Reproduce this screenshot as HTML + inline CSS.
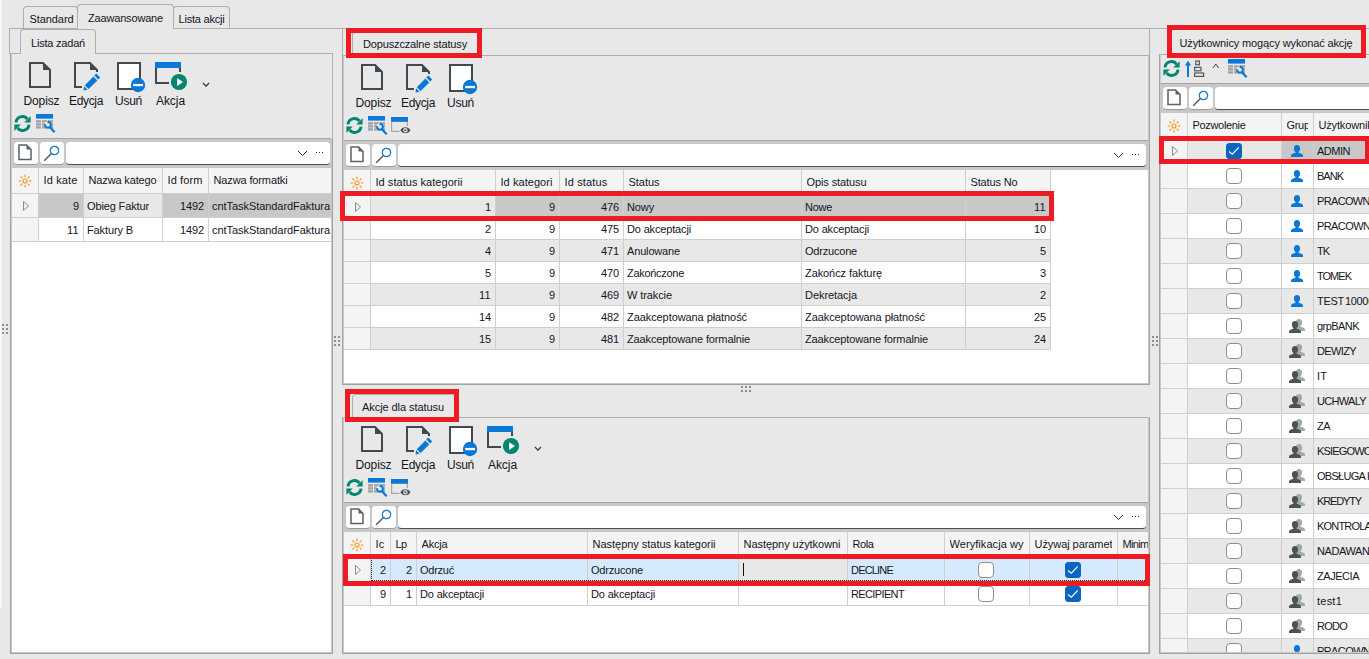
<!DOCTYPE html><html><head><meta charset="utf-8"><title>UI</title><style>
html,body{margin:0;padding:0;width:1369px;height:659px;overflow:hidden}
#root{left:0;top:0;width:1369px;height:659px;overflow:hidden;background:#e8e8e8}
body{width:1369px;height:659px;overflow:hidden;background:#e8e8e8;position:relative;font-family:"Liberation Sans",sans-serif;font-size:11px;color:#15151c}
div,svg{position:absolute;box-sizing:content-box}
.t{white-space:nowrap}
.tab{border:1px solid #aeaeae;border-bottom:none;border-radius:4px 4px 0 0;background:#e8e8e8;box-sizing:border-box}
</style></head><body><div id="root">
<div style="left:0px;top:0px;width:2px;height:608px;background:#f6f6f6;"></div>
<div class="tab" style="left:23px;top:6px;width:55px;height:23px"></div>
<div class="tab" style="left:173px;top:6px;width:57px;height:23px"></div>
<div style="left:9px;top:28px;width:1360px;height:1px;background:#aeaeae;"></div>
<div style="left:9px;top:28px;width:1px;height:26px;background:#aeaeae;"></div>
<div class="tab" style="left:77px;top:4px;width:97px;height:25px"></div>
<div class="t" style="left:24px;top:12px;width:55px;height:14px;line-height:14px;text-align:center;letter-spacing:-0.081px;">Standard</div>
<div class="t" style="left:77px;top:11px;width:97px;height:14px;line-height:14px;text-align:center;letter-spacing:-0.171px;">Zaawansowane</div>
<div class="t" style="left:173px;top:12px;width:57px;height:14px;line-height:14px;text-align:center;letter-spacing:-0.209px;">Lista akcji</div>
<div style="left:10px;top:53px;width:323px;height:1px;background:#aeaeae;"></div>
<div class="tab" style="left:20px;top:29px;width:76px;height:25px"></div>
<div class="t" style="left:20px;top:36px;width:76px;height:14px;line-height:14px;text-align:center;letter-spacing:-0.206px;">Lista zadań</div>
<svg style="left:29px;top:62px" width="24" height="28" viewBox="0 0 24 28"><path d="M1 1H14L21 8V25H1Z" fill="none" stroke="#414a50" stroke-width="2"/><path d="M14 0.5V8H21.5Z" fill="#414a50"/></svg>
<svg style="left:74px;top:62px" width="28" height="30" viewBox="0 0 28 30"><path d="M8 25H1V1H16L23 8V10" fill="none" stroke="#414a50" stroke-width="2"/><path d="M16 0.5V8H23.5Z" fill="#414a50"/><g fill="#0b78d5"><path d="M22.3 11.6L26.2 15.4L24.2 17.4L20.3 13.6Z"/><path d="M19.4 14.5L23.3 18.4L14.6 27L10.8 23.2Z"/><path d="M10.1 24.2L13.6 27.7L9.6 28.4Z"/></g></svg>
<svg style="left:117px;top:62px" width="30" height="32" viewBox="0 0 30 32"><rect x="1" y="1" width="22" height="26" fill="#fff" stroke="#414a50" stroke-width="2"/><circle cx="21" cy="23" r="7.2" fill="#0b78d5"/><rect x="16.2" y="21.9" width="9.8" height="2.3" fill="#fff"/></svg>
<div class="t" style="left:18.5px;top:93.5px;width:46px;height:14px;line-height:14px;text-align:center;letter-spacing:-0.113px;font-size:12px;">Dopisz</div>
<div class="t" style="left:63px;top:93.5px;width:46px;height:14px;line-height:14px;text-align:center;letter-spacing:-0.336px;font-size:12px;">Edycja</div>
<div class="t" style="left:105.5px;top:93.5px;width:46px;height:14px;line-height:14px;text-align:center;letter-spacing:-0.303px;font-size:12px;">Usuń</div>
<svg style="left:155px;top:62px" width="34" height="30" viewBox="0 0 34 30"><path d="M1 6V21H14M25 6V10" fill="none" stroke="#414a50" stroke-width="2"/><rect x="0" y="0" width="26" height="6" fill="#0b78d5"/><circle cx="24" cy="20" r="8.1" fill="#03866f"/><path d="M22.1 16.2V23.9L28 20Z" fill="#fff"/></svg>
<div class="t" style="left:147.5px;top:93.5px;width:46px;height:14px;line-height:14px;text-align:center;letter-spacing:-0.069px;font-size:12px;">Akcja</div>
<svg style="left:202px;top:82px" width="8" height="5.2" viewBox="0 0 8 5.2"><path d="M1 1L4 4.2L7 1" fill="none" stroke="#333" stroke-width="1.2"/></svg>
<svg style="left:14px;top:115px" width="17" height="17" viewBox="0 0 17 17"><g fill="none" stroke="#03866f" stroke-width="3"><path d="M2 7.4A6.4 6.4 0 0 1 13.4 4"/><path d="M15 9.6A6.4 6.4 0 0 1 3.6 13"/></g><path d="M16.6 1.2V7.6H10.2Z" fill="#03866f"/><path d="M0.4 15.8V9.4H6.8Z" fill="#03866f"/></svg>
<svg style="left:36px;top:114px" width="20" height="20" viewBox="0 0 20 20"><rect x="0" y="0" width="17" height="4.6" fill="#0b78d5"/><rect x="0" y="6.2" width="5" height="2.4" fill="#a2a2a2"/><rect x="6" y="6.2" width="5" height="2.4" fill="#a2a2a2"/><rect x="12" y="6.2" width="5" height="2.4" fill="#a2a2a2"/><rect x="0" y="9.2" width="5" height="2.4" fill="#a2a2a2"/><rect x="6" y="9.2" width="5" height="2.4" fill="#a2a2a2"/><rect x="12" y="9.2" width="5" height="2.4" fill="#a2a2a2"/><rect x="0" y="12.2" width="5" height="2.4" fill="#a2a2a2"/><rect x="6" y="12.2" width="5" height="2.4" fill="#a2a2a2"/><rect x="12" y="12.2" width="5" height="2.4" fill="#a2a2a2"/><circle cx="12" cy="10.8" r="3.6" fill="#e8e8e8"/><path d="M11.5 7.94A2.9 2.9 0 1 1 9.14 10.3" fill="none" stroke="#0b78d5" stroke-width="2.1"/><path d="M13.8 13L18.6 18.2" stroke="#0b78d5" stroke-width="2.2"/></svg>
<div style="left:12px;top:138px;width:319px;height:1px;background:#a4a4a4;"></div>
<div style="left:12px;top:139px;width:319px;height:29px;background:#c8c8c8;"></div>
<div style="left:14px;top:142px;width:24px;height:22.5px;background:#fff;border-radius:3.5px;border-bottom:1px solid #9a9a9a;box-sizing:border-box;"></div>
<div style="left:40px;top:142px;width:24px;height:22.5px;background:#fff;border-radius:3.5px;border-bottom:1px solid #9a9a9a;box-sizing:border-box;"></div>
<div style="left:66px;top:142px;width:264px;height:23px;background:#fff;border-radius:3.5px;border-bottom:1px solid #4e4e4e;box-sizing:border-box;"></div>
<svg style="left:18px;top:144px" width="15" height="18" viewBox="0 0 15 18"><path d="M1 1H8.5L13 5.5V15.5H1Z" fill="none" stroke="#5a6268" stroke-width="1.5"/><path d="M8.5 0.6V5.5H13.4Z" fill="#5a6268"/></svg>
<svg style="left:42.5px;top:144.5px" width="18" height="18" viewBox="0 0 18 18"><circle cx="11.5" cy="5.5" r="4.2" fill="none" stroke="#0b78d5" stroke-width="1.2"/><path d="M8.4 8.6L1.2 15.8" stroke="#555" stroke-width="1.4"/></svg>
<svg style="left:297px;top:149.5px" width="11" height="6.5" viewBox="0 0 11 6.5"><path d="M1 1L5.5 5.5L10 1" fill="none" stroke="#333" stroke-width="1"/></svg>
<div style="left:316px;top:152px;width:1px;height:1px;background:#333;"></div>
<div style="left:319px;top:152px;width:1px;height:1px;background:#333;"></div>
<div style="left:322px;top:152px;width:1px;height:1px;background:#333;"></div>
<div style="left:12px;top:168px;width:319px;height:484px;background:#fff;"></div>
<div style="left:12px;top:168px;width:319px;height:26px;background:#f4f4f4;"></div>
<div style="left:12px;top:194px;width:319px;height:24px;background:#c8c8c8;"></div>
<div style="left:12px;top:194px;width:27px;height:24px;background:#f4f4f4;"></div>
<div class="t" style="left:39px;top:195px;width:40px;height:23px;line-height:23px;text-align:right;overflow:hidden;letter-spacing:-0.118px;">9</div>
<div style="left:84px;top:194px;width:79px;height:24px;background:#e8e8e8;"></div>
<div class="t" style="left:87px;top:195px;width:76px;height:23px;line-height:23px;text-align:left;overflow:hidden;white-space:nowrap;letter-spacing:-0.132px;">Obieg Faktur</div>
<div class="t" style="left:163px;top:195px;width:41px;height:23px;line-height:23px;text-align:right;overflow:hidden;letter-spacing:-0.118px;">1492</div>
<div class="t" style="left:212px;top:195px;width:119px;height:23px;line-height:23px;text-align:left;overflow:hidden;white-space:nowrap;letter-spacing:-0.056px;">cntTaskStandardFaktura</div>
<div style="left:12px;top:217px;width:319px;height:1px;background:#cfcfcf;"></div>
<div style="left:12px;top:218px;width:319px;height:24px;background:#fff;"></div>
<div style="left:12px;top:218px;width:27px;height:24px;background:#f4f4f4;"></div>
<div class="t" style="left:39px;top:219px;width:40px;height:23px;line-height:23px;text-align:right;overflow:hidden;letter-spacing:0.291px;">11</div>
<div class="t" style="left:87px;top:219px;width:76px;height:23px;line-height:23px;text-align:left;overflow:hidden;white-space:nowrap;letter-spacing:-0.119px;">Faktury B</div>
<div class="t" style="left:163px;top:219px;width:41px;height:23px;line-height:23px;text-align:right;overflow:hidden;letter-spacing:-0.118px;">1492</div>
<div class="t" style="left:212px;top:219px;width:119px;height:23px;line-height:23px;text-align:left;overflow:hidden;white-space:nowrap;letter-spacing:-0.056px;">cntTaskStandardFaktura</div>
<div style="left:12px;top:241px;width:319px;height:1px;background:#cfcfcf;"></div>
<div style="left:38px;top:168px;width:1px;height:74px;background:#cfcfcf;"></div>
<div class="t" style="left:43.5px;top:168px;width:34.5px;height:25px;line-height:25px;text-align:left;overflow:hidden;white-space:nowrap;letter-spacing:0.14px;">Id kate</div>
<div style="left:83px;top:168px;width:1px;height:74px;background:#cfcfcf;"></div>
<div class="t" style="left:88.5px;top:168px;width:68.5px;height:25px;line-height:25px;text-align:left;overflow:hidden;white-space:nowrap;letter-spacing:-0.142px;">Nazwa katego</div>
<div style="left:162px;top:168px;width:1px;height:74px;background:#cfcfcf;"></div>
<div class="t" style="left:167.5px;top:168px;width:35.5px;height:25px;line-height:25px;text-align:left;overflow:hidden;white-space:nowrap;letter-spacing:0.11px;">Id form</div>
<div style="left:208px;top:168px;width:1px;height:74px;background:#cfcfcf;"></div>
<div class="t" style="left:213.5px;top:168px;width:117px;height:25px;line-height:25px;text-align:left;overflow:hidden;white-space:nowrap;letter-spacing:-0.128px;">Nazwa formatki</div>
<div style="left:12px;top:193px;width:319px;height:1px;background:#cfcfcf;"></div>
<svg style="left:18px;top:173.5px" width="14" height="14" viewBox="0 0 14 14"><circle cx="7" cy="7" r="2" fill="none" stroke="#f7941d" stroke-width="1.1"/><path d="M10.80 7.00L13.40 7.00" stroke="#f7941d" stroke-width="1.1"/><path d="M9.69 9.69L11.53 11.53" stroke="#f7941d" stroke-width="1.1"/><path d="M7.00 10.80L7.00 13.40" stroke="#f7941d" stroke-width="1.1"/><path d="M4.31 9.69L2.47 11.53" stroke="#f7941d" stroke-width="1.1"/><path d="M3.20 7.00L0.60 7.00" stroke="#f7941d" stroke-width="1.1"/><path d="M4.31 4.31L2.47 2.47" stroke="#f7941d" stroke-width="1.1"/><path d="M7.00 3.20L7.00 0.60" stroke="#f7941d" stroke-width="1.1"/><path d="M9.69 4.31L11.53 2.47" stroke="#f7941d" stroke-width="1.1"/></svg>
<svg style="left:22px;top:199.5px" width="8" height="12" viewBox="0 0 8 12"><path d="M1.5 1.5V10.5L6.5 6Z" fill="none" stroke="#8c8c8c" stroke-width="1"/></svg>
<div style="left:12px;top:652px;width:319px;height:7px;background:#e8e8e8;"></div>
<div style="left:10px;top:53px;width:1px;height:90px;background:#a2a2a2;"></div>
<div style="left:11px;top:53px;width:1px;height:90px;background:#c8c8c8;"></div>
<div style="left:332px;top:53px;width:1px;height:90px;background:#aeaeae;"></div>
<div style="left:10px;top:139px;width:1px;height:515px;background:#a2a2a2;"></div>
<div style="left:11px;top:139px;width:1px;height:514px;background:#c8c8c8;"></div>
<div style="left:332px;top:139px;width:1px;height:515px;background:#a2a2a2;"></div>
<div style="left:331px;top:139px;width:1px;height:514px;background:#c8c8c8;"></div>
<div style="left:11px;top:652px;width:321px;height:1px;background:#c8c8c8;"></div>
<div style="left:10px;top:653px;width:323px;height:1px;background:#a2a2a2;"></div>
<div style="left:342px;top:55px;width:808px;height:1px;background:#aeaeae;"></div>
<div style="left:1149px;top:28px;width:1px;height:27px;background:#aeaeae;"></div>
<div style="left:342px;top:28px;width:1px;height:27px;background:#aeaeae;"></div>
<div class="tab" style="left:352px;top:31px;width:128px;height:25px"></div>
<div class="t" style="left:352px;top:37px;width:126px;height:14px;line-height:14px;text-align:center;letter-spacing:-0.15px;">Dopuszczalne statusy</div>
<svg style="left:361px;top:64px" width="24" height="28" viewBox="0 0 24 28"><path d="M1 1H14L21 8V25H1Z" fill="none" stroke="#414a50" stroke-width="2"/><path d="M14 0.5V8H21.5Z" fill="#414a50"/></svg>
<svg style="left:406px;top:64px" width="28" height="30" viewBox="0 0 28 30"><path d="M8 25H1V1H16L23 8V10" fill="none" stroke="#414a50" stroke-width="2"/><path d="M16 0.5V8H23.5Z" fill="#414a50"/><g fill="#0b78d5"><path d="M22.3 11.6L26.2 15.4L24.2 17.4L20.3 13.6Z"/><path d="M19.4 14.5L23.3 18.4L14.6 27L10.8 23.2Z"/><path d="M10.1 24.2L13.6 27.7L9.6 28.4Z"/></g></svg>
<svg style="left:449px;top:64px" width="30" height="32" viewBox="0 0 30 32"><rect x="1" y="1" width="22" height="26" fill="#fff" stroke="#414a50" stroke-width="2"/><circle cx="21" cy="23" r="7.2" fill="#0b78d5"/><rect x="16.2" y="21.9" width="9.8" height="2.3" fill="#fff"/></svg>
<div class="t" style="left:350.5px;top:95.5px;width:46px;height:14px;line-height:14px;text-align:center;letter-spacing:-0.113px;font-size:12px;">Dopisz</div>
<div class="t" style="left:395px;top:95.5px;width:46px;height:14px;line-height:14px;text-align:center;letter-spacing:-0.336px;font-size:12px;">Edycja</div>
<div class="t" style="left:437.5px;top:95.5px;width:46px;height:14px;line-height:14px;text-align:center;letter-spacing:-0.303px;font-size:12px;">Usuń</div>
<svg style="left:346px;top:117px" width="17" height="17" viewBox="0 0 17 17"><g fill="none" stroke="#03866f" stroke-width="3"><path d="M2 7.4A6.4 6.4 0 0 1 13.4 4"/><path d="M15 9.6A6.4 6.4 0 0 1 3.6 13"/></g><path d="M16.6 1.2V7.6H10.2Z" fill="#03866f"/><path d="M0.4 15.8V9.4H6.8Z" fill="#03866f"/></svg>
<svg style="left:368px;top:116px" width="20" height="20" viewBox="0 0 20 20"><rect x="0" y="0" width="17" height="4.6" fill="#0b78d5"/><rect x="0" y="6.2" width="5" height="2.4" fill="#a2a2a2"/><rect x="6" y="6.2" width="5" height="2.4" fill="#a2a2a2"/><rect x="12" y="6.2" width="5" height="2.4" fill="#a2a2a2"/><rect x="0" y="9.2" width="5" height="2.4" fill="#a2a2a2"/><rect x="6" y="9.2" width="5" height="2.4" fill="#a2a2a2"/><rect x="12" y="9.2" width="5" height="2.4" fill="#a2a2a2"/><rect x="0" y="12.2" width="5" height="2.4" fill="#a2a2a2"/><rect x="6" y="12.2" width="5" height="2.4" fill="#a2a2a2"/><rect x="12" y="12.2" width="5" height="2.4" fill="#a2a2a2"/><circle cx="12" cy="10.8" r="3.6" fill="#e8e8e8"/><path d="M11.5 7.94A2.9 2.9 0 1 1 9.14 10.3" fill="none" stroke="#0b78d5" stroke-width="2.1"/><path d="M13.8 13L18.6 18.2" stroke="#0b78d5" stroke-width="2.2"/></svg>
<svg style="left:391px;top:117px" width="20" height="18" viewBox="0 0 20 18"><path d="M0.6 5V14.4H8.5M16.4 5V9" fill="none" stroke="#a8a8a8" stroke-width="1.2"/><rect x="0" y="0" width="17" height="4.8" fill="#0b78d5"/><path d="M9.4 13.3C11.2 9.3 17.6 9.3 19.4 13.3C17.6 17.3 11.2 17.3 9.4 13.3Z" fill="#414a50"/><circle cx="14.4" cy="13.3" r="2.2" fill="#e8e8e8"/><circle cx="14.4" cy="13.3" r="1" fill="#414a50"/></svg>
<div style="left:344px;top:140px;width:804px;height:1px;background:#a4a4a4;"></div>
<div style="left:344px;top:141px;width:804px;height:29px;background:#c8c8c8;"></div>
<div style="left:346px;top:144px;width:24px;height:22.5px;background:#fff;border-radius:3.5px;border-bottom:1px solid #9a9a9a;box-sizing:border-box;"></div>
<div style="left:372px;top:144px;width:24px;height:22.5px;background:#fff;border-radius:3.5px;border-bottom:1px solid #9a9a9a;box-sizing:border-box;"></div>
<div style="left:398px;top:144px;width:748px;height:23px;background:#fff;border-radius:3.5px;border-bottom:1px solid #4e4e4e;box-sizing:border-box;"></div>
<svg style="left:350px;top:146px" width="15" height="18" viewBox="0 0 15 18"><path d="M1 1H8.5L13 5.5V15.5H1Z" fill="none" stroke="#5a6268" stroke-width="1.5"/><path d="M8.5 0.6V5.5H13.4Z" fill="#5a6268"/></svg>
<svg style="left:374.5px;top:146.5px" width="18" height="18" viewBox="0 0 18 18"><circle cx="11.5" cy="5.5" r="4.2" fill="none" stroke="#0b78d5" stroke-width="1.2"/><path d="M8.4 8.6L1.2 15.8" stroke="#555" stroke-width="1.4"/></svg>
<svg style="left:1113px;top:151.5px" width="11" height="6.5" viewBox="0 0 11 6.5"><path d="M1 1L5.5 5.5L10 1" fill="none" stroke="#333" stroke-width="1"/></svg>
<div style="left:1132px;top:154px;width:1px;height:1px;background:#333;"></div>
<div style="left:1135px;top:154px;width:1px;height:1px;background:#333;"></div>
<div style="left:1138px;top:154px;width:1px;height:1px;background:#333;"></div>
<div style="left:344px;top:170px;width:804px;height:213px;background:#fff;"></div>
<div style="left:344px;top:170px;width:707px;height:26px;background:#f4f4f4;"></div>
<div style="left:344px;top:196px;width:707px;height:22px;background:#c8c8c8;"></div>
<div style="left:344px;top:196px;width:27px;height:22px;background:#f4f4f4;"></div>
<div style="left:371px;top:196px;width:125px;height:22px;background:#e8e8e8;"></div>
<div class="t" style="left:371px;top:197px;width:120px;height:21px;line-height:21px;text-align:right;overflow:hidden;letter-spacing:-0.118px;">1</div>
<div class="t" style="left:496px;top:197px;width:59px;height:21px;line-height:21px;text-align:right;overflow:hidden;letter-spacing:-0.118px;">9</div>
<div class="t" style="left:560px;top:197px;width:59px;height:21px;line-height:21px;text-align:right;overflow:hidden;letter-spacing:-0.118px;">476</div>
<div class="t" style="left:627px;top:197px;width:175px;height:21px;line-height:21px;text-align:left;overflow:hidden;white-space:nowrap;letter-spacing:-0.126px;">Nowy</div>
<div class="t" style="left:805px;top:197px;width:161px;height:21px;line-height:21px;text-align:left;overflow:hidden;white-space:nowrap;letter-spacing:-0.281px;">Nowe</div>
<div class="t" style="left:966px;top:197px;width:80px;height:21px;line-height:21px;text-align:right;overflow:hidden;letter-spacing:0.291px;">11</div>
<div style="left:344px;top:217px;width:707px;height:1px;background:#cfcfcf;"></div>
<div style="left:344px;top:218px;width:707px;height:22px;background:#fff;"></div>
<div style="left:344px;top:218px;width:27px;height:22px;background:#f4f4f4;"></div>
<div class="t" style="left:371px;top:219px;width:120px;height:21px;line-height:21px;text-align:right;overflow:hidden;letter-spacing:-0.118px;">2</div>
<div class="t" style="left:496px;top:219px;width:59px;height:21px;line-height:21px;text-align:right;overflow:hidden;letter-spacing:-0.118px;">9</div>
<div class="t" style="left:560px;top:219px;width:59px;height:21px;line-height:21px;text-align:right;overflow:hidden;letter-spacing:-0.118px;">475</div>
<div class="t" style="left:627px;top:219px;width:175px;height:21px;line-height:21px;text-align:left;overflow:hidden;white-space:nowrap;letter-spacing:-0.156px;">Do akceptacji</div>
<div class="t" style="left:805px;top:219px;width:161px;height:21px;line-height:21px;text-align:left;overflow:hidden;white-space:nowrap;letter-spacing:-0.156px;">Do akceptacji</div>
<div class="t" style="left:966px;top:219px;width:80px;height:21px;line-height:21px;text-align:right;overflow:hidden;letter-spacing:-0.118px;">10</div>
<div style="left:344px;top:239px;width:707px;height:1px;background:#cfcfcf;"></div>
<div style="left:344px;top:240px;width:707px;height:22px;background:#e8e8e8;"></div>
<div style="left:344px;top:240px;width:27px;height:22px;background:#f4f4f4;"></div>
<div class="t" style="left:371px;top:241px;width:120px;height:21px;line-height:21px;text-align:right;overflow:hidden;letter-spacing:-0.118px;">4</div>
<div class="t" style="left:496px;top:241px;width:59px;height:21px;line-height:21px;text-align:right;overflow:hidden;letter-spacing:-0.118px;">9</div>
<div class="t" style="left:560px;top:241px;width:59px;height:21px;line-height:21px;text-align:right;overflow:hidden;letter-spacing:-0.118px;">471</div>
<div class="t" style="left:627px;top:241px;width:175px;height:21px;line-height:21px;text-align:left;overflow:hidden;white-space:nowrap;letter-spacing:-0.159px;">Anulowane</div>
<div class="t" style="left:805px;top:241px;width:161px;height:21px;line-height:21px;text-align:left;overflow:hidden;white-space:nowrap;letter-spacing:-0.201px;">Odrzucone</div>
<div class="t" style="left:966px;top:241px;width:80px;height:21px;line-height:21px;text-align:right;overflow:hidden;letter-spacing:-0.118px;">5</div>
<div style="left:344px;top:261px;width:707px;height:1px;background:#cfcfcf;"></div>
<div style="left:344px;top:262px;width:707px;height:22px;background:#fff;"></div>
<div style="left:344px;top:262px;width:27px;height:22px;background:#f4f4f4;"></div>
<div class="t" style="left:371px;top:263px;width:120px;height:21px;line-height:21px;text-align:right;overflow:hidden;letter-spacing:-0.118px;">5</div>
<div class="t" style="left:496px;top:263px;width:59px;height:21px;line-height:21px;text-align:right;overflow:hidden;letter-spacing:-0.118px;">9</div>
<div class="t" style="left:560px;top:263px;width:59px;height:21px;line-height:21px;text-align:right;overflow:hidden;letter-spacing:-0.118px;">470</div>
<div class="t" style="left:627px;top:263px;width:175px;height:21px;line-height:21px;text-align:left;overflow:hidden;white-space:nowrap;letter-spacing:-0.293px;">Zakończone</div>
<div class="t" style="left:805px;top:263px;width:161px;height:21px;line-height:21px;text-align:left;overflow:hidden;white-space:nowrap;letter-spacing:-0.084px;">Zakończ fakturę</div>
<div class="t" style="left:966px;top:263px;width:80px;height:21px;line-height:21px;text-align:right;overflow:hidden;letter-spacing:-0.118px;">3</div>
<div style="left:344px;top:283px;width:707px;height:1px;background:#cfcfcf;"></div>
<div style="left:344px;top:284px;width:707px;height:22px;background:#e8e8e8;"></div>
<div style="left:344px;top:284px;width:27px;height:22px;background:#f4f4f4;"></div>
<div class="t" style="left:371px;top:285px;width:120px;height:21px;line-height:21px;text-align:right;overflow:hidden;letter-spacing:0.291px;">11</div>
<div class="t" style="left:496px;top:285px;width:59px;height:21px;line-height:21px;text-align:right;overflow:hidden;letter-spacing:-0.118px;">9</div>
<div class="t" style="left:560px;top:285px;width:59px;height:21px;line-height:21px;text-align:right;overflow:hidden;letter-spacing:-0.118px;">469</div>
<div class="t" style="left:627px;top:285px;width:175px;height:21px;line-height:21px;text-align:left;overflow:hidden;white-space:nowrap;letter-spacing:-0.093px;">W trakcie</div>
<div class="t" style="left:805px;top:285px;width:161px;height:21px;line-height:21px;text-align:left;overflow:hidden;white-space:nowrap;letter-spacing:-0.058px;">Dekretacja</div>
<div class="t" style="left:966px;top:285px;width:80px;height:21px;line-height:21px;text-align:right;overflow:hidden;letter-spacing:-0.118px;">2</div>
<div style="left:344px;top:305px;width:707px;height:1px;background:#cfcfcf;"></div>
<div style="left:344px;top:306px;width:707px;height:22px;background:#fff;"></div>
<div style="left:344px;top:306px;width:27px;height:22px;background:#f4f4f4;"></div>
<div class="t" style="left:371px;top:307px;width:120px;height:21px;line-height:21px;text-align:right;overflow:hidden;letter-spacing:-0.118px;">14</div>
<div class="t" style="left:496px;top:307px;width:59px;height:21px;line-height:21px;text-align:right;overflow:hidden;letter-spacing:-0.118px;">9</div>
<div class="t" style="left:560px;top:307px;width:59px;height:21px;line-height:21px;text-align:right;overflow:hidden;letter-spacing:-0.118px;">482</div>
<div class="t" style="left:627px;top:307px;width:175px;height:21px;line-height:21px;text-align:left;overflow:hidden;white-space:nowrap;letter-spacing:-0.077px;">Zaakceptowana płatność</div>
<div class="t" style="left:805px;top:307px;width:161px;height:21px;line-height:21px;text-align:left;overflow:hidden;white-space:nowrap;letter-spacing:-0.077px;">Zaakceptowana płatność</div>
<div class="t" style="left:966px;top:307px;width:80px;height:21px;line-height:21px;text-align:right;overflow:hidden;letter-spacing:-0.118px;">25</div>
<div style="left:344px;top:327px;width:707px;height:1px;background:#cfcfcf;"></div>
<div style="left:344px;top:328px;width:707px;height:22px;background:#e8e8e8;"></div>
<div style="left:344px;top:328px;width:27px;height:22px;background:#f4f4f4;"></div>
<div class="t" style="left:371px;top:329px;width:120px;height:21px;line-height:21px;text-align:right;overflow:hidden;letter-spacing:-0.118px;">15</div>
<div class="t" style="left:496px;top:329px;width:59px;height:21px;line-height:21px;text-align:right;overflow:hidden;letter-spacing:-0.118px;">9</div>
<div class="t" style="left:560px;top:329px;width:59px;height:21px;line-height:21px;text-align:right;overflow:hidden;letter-spacing:-0.118px;">481</div>
<div class="t" style="left:627px;top:329px;width:175px;height:21px;line-height:21px;text-align:left;overflow:hidden;white-space:nowrap;letter-spacing:-0.129px;">Zaakceptowane formalnie</div>
<div class="t" style="left:805px;top:329px;width:161px;height:21px;line-height:21px;text-align:left;overflow:hidden;white-space:nowrap;letter-spacing:-0.129px;">Zaakceptowane formalnie</div>
<div class="t" style="left:966px;top:329px;width:80px;height:21px;line-height:21px;text-align:right;overflow:hidden;letter-spacing:-0.118px;">24</div>
<div style="left:344px;top:349px;width:707px;height:1px;background:#cfcfcf;"></div>
<div style="left:370px;top:170px;width:1px;height:180px;background:#cfcfcf;"></div>
<div class="t" style="left:375.5px;top:170px;width:114.5px;height:25px;line-height:25px;text-align:left;overflow:hidden;white-space:nowrap;letter-spacing:0.042px;">Id status kategorii</div>
<div style="left:495px;top:170px;width:1px;height:180px;background:#cfcfcf;"></div>
<div class="t" style="left:500.5px;top:170px;width:53.5px;height:25px;line-height:25px;text-align:left;overflow:hidden;white-space:nowrap;letter-spacing:0.058px;">Id kategori</div>
<div style="left:559px;top:170px;width:1px;height:180px;background:#cfcfcf;"></div>
<div class="t" style="left:564.5px;top:170px;width:53.5px;height:25px;line-height:25px;text-align:left;overflow:hidden;white-space:nowrap;letter-spacing:0.158px;">Id status</div>
<div style="left:623px;top:170px;width:1px;height:180px;background:#cfcfcf;"></div>
<div class="t" style="left:628.5px;top:170px;width:167.5px;height:25px;line-height:25px;text-align:left;overflow:hidden;white-space:nowrap;letter-spacing:-0.031px;">Status</div>
<div style="left:801px;top:170px;width:1px;height:180px;background:#cfcfcf;"></div>
<div class="t" style="left:806.5px;top:170px;width:153.5px;height:25px;line-height:25px;text-align:left;overflow:hidden;white-space:nowrap;letter-spacing:-0.095px;">Opis statusu</div>
<div style="left:965px;top:170px;width:1px;height:180px;background:#cfcfcf;"></div>
<div class="t" style="left:970.5px;top:170px;width:74.5px;height:25px;line-height:25px;text-align:left;overflow:hidden;white-space:nowrap;letter-spacing:-0.145px;">Status No</div>
<div style="left:1050px;top:170px;width:1px;height:180px;background:#cfcfcf;"></div>
<div style="left:344px;top:195px;width:707px;height:1px;background:#cfcfcf;"></div>
<svg style="left:350px;top:175.5px" width="14" height="14" viewBox="0 0 14 14"><circle cx="7" cy="7" r="2" fill="none" stroke="#f7941d" stroke-width="1.1"/><path d="M10.80 7.00L13.40 7.00" stroke="#f7941d" stroke-width="1.1"/><path d="M9.69 9.69L11.53 11.53" stroke="#f7941d" stroke-width="1.1"/><path d="M7.00 10.80L7.00 13.40" stroke="#f7941d" stroke-width="1.1"/><path d="M4.31 9.69L2.47 11.53" stroke="#f7941d" stroke-width="1.1"/><path d="M3.20 7.00L0.60 7.00" stroke="#f7941d" stroke-width="1.1"/><path d="M4.31 4.31L2.47 2.47" stroke="#f7941d" stroke-width="1.1"/><path d="M7.00 3.20L7.00 0.60" stroke="#f7941d" stroke-width="1.1"/><path d="M9.69 4.31L11.53 2.47" stroke="#f7941d" stroke-width="1.1"/></svg>
<svg style="left:354px;top:200.5px" width="8" height="12" viewBox="0 0 8 12"><path d="M1.5 1.5V10.5L6.5 6Z" fill="none" stroke="#8c8c8c" stroke-width="1"/></svg>
<div style="left:344px;top:383px;width:804px;height:276px;background:#e8e8e8;"></div>
<div style="left:342px;top:55px;width:1px;height:330px;background:#a2a2a2;"></div>
<div style="left:343px;top:55px;width:1px;height:329px;background:#c8c8c8;"></div>
<div style="left:1149px;top:55px;width:1px;height:330px;background:#a2a2a2;"></div>
<div style="left:1148px;top:55px;width:1px;height:329px;background:#c8c8c8;"></div>
<div style="left:343px;top:383px;width:806px;height:1px;background:#c8c8c8;"></div>
<div style="left:342px;top:384px;width:808px;height:1px;background:#a2a2a2;"></div>
<div style="left:342px;top:417px;width:808px;height:1px;background:#aeaeae;"></div>
<div class="tab" style="left:352px;top:394px;width:104px;height:24px"></div>
<div class="t" style="left:352px;top:400px;width:102px;height:14px;line-height:14px;text-align:center;letter-spacing:-0.068px;">Akcje dla statusu</div>
<svg style="left:361px;top:426px" width="24" height="28" viewBox="0 0 24 28"><path d="M1 1H14L21 8V25H1Z" fill="none" stroke="#414a50" stroke-width="2"/><path d="M14 0.5V8H21.5Z" fill="#414a50"/></svg>
<svg style="left:406px;top:426px" width="28" height="30" viewBox="0 0 28 30"><path d="M8 25H1V1H16L23 8V10" fill="none" stroke="#414a50" stroke-width="2"/><path d="M16 0.5V8H23.5Z" fill="#414a50"/><g fill="#0b78d5"><path d="M22.3 11.6L26.2 15.4L24.2 17.4L20.3 13.6Z"/><path d="M19.4 14.5L23.3 18.4L14.6 27L10.8 23.2Z"/><path d="M10.1 24.2L13.6 27.7L9.6 28.4Z"/></g></svg>
<svg style="left:449px;top:426px" width="30" height="32" viewBox="0 0 30 32"><rect x="1" y="1" width="22" height="26" fill="#fff" stroke="#414a50" stroke-width="2"/><circle cx="21" cy="23" r="7.2" fill="#0b78d5"/><rect x="16.2" y="21.9" width="9.8" height="2.3" fill="#fff"/></svg>
<div class="t" style="left:350.5px;top:457.5px;width:46px;height:14px;line-height:14px;text-align:center;letter-spacing:-0.113px;font-size:12px;">Dopisz</div>
<div class="t" style="left:395px;top:457.5px;width:46px;height:14px;line-height:14px;text-align:center;letter-spacing:-0.336px;font-size:12px;">Edycja</div>
<div class="t" style="left:437.5px;top:457.5px;width:46px;height:14px;line-height:14px;text-align:center;letter-spacing:-0.303px;font-size:12px;">Usuń</div>
<svg style="left:487px;top:426px" width="34" height="30" viewBox="0 0 34 30"><path d="M1 6V21H14M25 6V10" fill="none" stroke="#414a50" stroke-width="2"/><rect x="0" y="0" width="26" height="6" fill="#0b78d5"/><circle cx="24" cy="20" r="8.1" fill="#03866f"/><path d="M22.1 16.2V23.9L28 20Z" fill="#fff"/></svg>
<div class="t" style="left:479.5px;top:457.5px;width:46px;height:14px;line-height:14px;text-align:center;letter-spacing:-0.069px;font-size:12px;">Akcja</div>
<svg style="left:534px;top:446px" width="8" height="5.2" viewBox="0 0 8 5.2"><path d="M1 1L4 4.2L7 1" fill="none" stroke="#333" stroke-width="1.2"/></svg>
<svg style="left:346px;top:479px" width="17" height="17" viewBox="0 0 17 17"><g fill="none" stroke="#03866f" stroke-width="3"><path d="M2 7.4A6.4 6.4 0 0 1 13.4 4"/><path d="M15 9.6A6.4 6.4 0 0 1 3.6 13"/></g><path d="M16.6 1.2V7.6H10.2Z" fill="#03866f"/><path d="M0.4 15.8V9.4H6.8Z" fill="#03866f"/></svg>
<svg style="left:368px;top:478px" width="20" height="20" viewBox="0 0 20 20"><rect x="0" y="0" width="17" height="4.6" fill="#0b78d5"/><rect x="0" y="6.2" width="5" height="2.4" fill="#a2a2a2"/><rect x="6" y="6.2" width="5" height="2.4" fill="#a2a2a2"/><rect x="12" y="6.2" width="5" height="2.4" fill="#a2a2a2"/><rect x="0" y="9.2" width="5" height="2.4" fill="#a2a2a2"/><rect x="6" y="9.2" width="5" height="2.4" fill="#a2a2a2"/><rect x="12" y="9.2" width="5" height="2.4" fill="#a2a2a2"/><rect x="0" y="12.2" width="5" height="2.4" fill="#a2a2a2"/><rect x="6" y="12.2" width="5" height="2.4" fill="#a2a2a2"/><rect x="12" y="12.2" width="5" height="2.4" fill="#a2a2a2"/><circle cx="12" cy="10.8" r="3.6" fill="#e8e8e8"/><path d="M11.5 7.94A2.9 2.9 0 1 1 9.14 10.3" fill="none" stroke="#0b78d5" stroke-width="2.1"/><path d="M13.8 13L18.6 18.2" stroke="#0b78d5" stroke-width="2.2"/></svg>
<svg style="left:391px;top:479px" width="20" height="18" viewBox="0 0 20 18"><path d="M0.6 5V14.4H8.5M16.4 5V9" fill="none" stroke="#a8a8a8" stroke-width="1.2"/><rect x="0" y="0" width="17" height="4.8" fill="#0b78d5"/><path d="M9.4 13.3C11.2 9.3 17.6 9.3 19.4 13.3C17.6 17.3 11.2 17.3 9.4 13.3Z" fill="#414a50"/><circle cx="14.4" cy="13.3" r="2.2" fill="#e8e8e8"/><circle cx="14.4" cy="13.3" r="1" fill="#414a50"/></svg>
<div style="left:344px;top:502px;width:804px;height:1px;background:#a4a4a4;"></div>
<div style="left:344px;top:503px;width:804px;height:29px;background:#c8c8c8;"></div>
<div style="left:346px;top:506px;width:24px;height:22.5px;background:#fff;border-radius:3.5px;border-bottom:1px solid #9a9a9a;box-sizing:border-box;"></div>
<div style="left:372px;top:506px;width:24px;height:22.5px;background:#fff;border-radius:3.5px;border-bottom:1px solid #9a9a9a;box-sizing:border-box;"></div>
<div style="left:398px;top:506px;width:748px;height:23px;background:#fff;border-radius:3.5px;border-bottom:1px solid #4e4e4e;box-sizing:border-box;"></div>
<svg style="left:350px;top:508px" width="15" height="18" viewBox="0 0 15 18"><path d="M1 1H8.5L13 5.5V15.5H1Z" fill="none" stroke="#5a6268" stroke-width="1.5"/><path d="M8.5 0.6V5.5H13.4Z" fill="#5a6268"/></svg>
<svg style="left:374.5px;top:508.5px" width="18" height="18" viewBox="0 0 18 18"><circle cx="11.5" cy="5.5" r="4.2" fill="none" stroke="#0b78d5" stroke-width="1.2"/><path d="M8.4 8.6L1.2 15.8" stroke="#555" stroke-width="1.4"/></svg>
<svg style="left:1113px;top:513.5px" width="11" height="6.5" viewBox="0 0 11 6.5"><path d="M1 1L5.5 5.5L10 1" fill="none" stroke="#333" stroke-width="1"/></svg>
<div style="left:1132px;top:516px;width:1px;height:1px;background:#333;"></div>
<div style="left:1135px;top:516px;width:1px;height:1px;background:#333;"></div>
<div style="left:1138px;top:516px;width:1px;height:1px;background:#333;"></div>
<div style="left:344px;top:532px;width:804px;height:120px;background:#fff;"></div>
<div style="left:344px;top:532px;width:804px;height:26px;background:#f4f4f4;"></div>
<div style="left:344px;top:558px;width:804px;height:24px;background:#d6eafd;"></div>
<div style="left:344px;top:558px;width:27px;height:24px;background:#f4f4f4;"></div>
<div class="t" style="left:371px;top:559px;width:15px;height:23px;line-height:23px;text-align:right;overflow:hidden;letter-spacing:-0.118px;">2</div>
<div class="t" style="left:391px;top:559px;width:21px;height:23px;line-height:23px;text-align:right;overflow:hidden;letter-spacing:-0.118px;">2</div>
<div class="t" style="left:420px;top:559px;width:168px;height:23px;line-height:23px;text-align:left;overflow:hidden;white-space:nowrap;letter-spacing:-0.242px;">Odrzuć</div>
<div class="t" style="left:591px;top:559px;width:148px;height:23px;line-height:23px;text-align:left;overflow:hidden;white-space:nowrap;letter-spacing:-0.201px;">Odrzucone</div>
<div style="left:739px;top:558px;width:109px;height:24px;background:#e8e8e8;"></div>
<div class="t" style="left:851px;top:559px;width:94px;height:23px;line-height:23px;text-align:left;overflow:hidden;white-space:nowrap;letter-spacing:-0.811px;">DECLINE</div>
<svg style="left:978px;top:562px" width="16" height="16" viewBox="0 0 16 16"><rect x="0.5" y="0.5" width="15" height="15" rx="3.5" fill="#fff" stroke="#8f8f8f" stroke-width="1"/></svg>
<svg style="left:1065px;top:562px" width="16" height="16" viewBox="0 0 16 16"><rect x="0" y="0" width="16" height="16" rx="3.5" fill="#0b64c0"/><path d="M3 8.5L6.3 11.2L12.8 4.4" fill="none" stroke="#fff" stroke-width="1.1"/></svg>
<div style="left:344px;top:581px;width:804px;height:1px;background:#cfcfcf;"></div>
<div style="left:344px;top:582px;width:804px;height:24px;background:#fff;"></div>
<div style="left:344px;top:582px;width:27px;height:24px;background:#f4f4f4;"></div>
<div class="t" style="left:371px;top:583px;width:15px;height:23px;line-height:23px;text-align:right;overflow:hidden;letter-spacing:-0.118px;">9</div>
<div class="t" style="left:391px;top:583px;width:21px;height:23px;line-height:23px;text-align:right;overflow:hidden;letter-spacing:-0.118px;">1</div>
<div class="t" style="left:420px;top:583px;width:168px;height:23px;line-height:23px;text-align:left;overflow:hidden;white-space:nowrap;letter-spacing:-0.156px;">Do akceptacji</div>
<div class="t" style="left:591px;top:583px;width:148px;height:23px;line-height:23px;text-align:left;overflow:hidden;white-space:nowrap;letter-spacing:-0.156px;">Do akceptacji</div>
<div class="t" style="left:851px;top:583px;width:94px;height:23px;line-height:23px;text-align:left;overflow:hidden;white-space:nowrap;letter-spacing:-0.63px;">RECIPIENT</div>
<svg style="left:978px;top:586px" width="16" height="16" viewBox="0 0 16 16"><rect x="0.5" y="0.5" width="15" height="15" rx="3.5" fill="#fff" stroke="#8f8f8f" stroke-width="1"/></svg>
<svg style="left:1065px;top:586px" width="16" height="16" viewBox="0 0 16 16"><rect x="0" y="0" width="16" height="16" rx="3.5" fill="#0b64c0"/><path d="M3 8.5L6.3 11.2L12.8 4.4" fill="none" stroke="#fff" stroke-width="1.1"/></svg>
<div style="left:344px;top:605px;width:804px;height:1px;background:#cfcfcf;"></div>
<div style="left:370px;top:532px;width:1px;height:74px;background:#cfcfcf;"></div>
<div class="t" style="left:375.5px;top:532px;width:9.5px;height:25px;line-height:25px;text-align:left;overflow:hidden;white-space:nowrap;letter-spacing:0.222px;">Ic</div>
<div style="left:390px;top:532px;width:1px;height:74px;background:#cfcfcf;"></div>
<div class="t" style="left:395.5px;top:532px;width:15.5px;height:25px;line-height:25px;text-align:left;overflow:hidden;white-space:nowrap;letter-spacing:-0.618px;">Lp</div>
<div style="left:416px;top:532px;width:1px;height:74px;background:#cfcfcf;"></div>
<div class="t" style="left:421.5px;top:532px;width:160.5px;height:25px;line-height:25px;text-align:left;overflow:hidden;white-space:nowrap;letter-spacing:-0.18px;">Akcja</div>
<div style="left:587px;top:532px;width:1px;height:74px;background:#cfcfcf;"></div>
<div class="t" style="left:592.5px;top:532px;width:140.5px;height:25px;line-height:25px;text-align:left;overflow:hidden;white-space:nowrap;letter-spacing:-0.02px;">Następny status kategorii</div>
<div style="left:738px;top:532px;width:1px;height:74px;background:#cfcfcf;"></div>
<div class="t" style="left:743.5px;top:532px;width:98.5px;height:25px;line-height:25px;text-align:left;overflow:hidden;white-space:nowrap;letter-spacing:-0.046px;">Następny użytkowni</div>
<div style="left:847px;top:532px;width:1px;height:74px;background:#cfcfcf;"></div>
<div class="t" style="left:852.5px;top:532px;width:86.5px;height:25px;line-height:25px;text-align:left;overflow:hidden;white-space:nowrap;letter-spacing:-0.406px;">Rola</div>
<div style="left:944px;top:532px;width:1px;height:74px;background:#cfcfcf;"></div>
<div class="t" style="left:949.5px;top:532px;width:74.5px;height:25px;line-height:25px;text-align:left;overflow:hidden;white-space:nowrap;letter-spacing:0.061px;">Weryfikacja wy</div>
<div style="left:1029px;top:532px;width:1px;height:74px;background:#cfcfcf;"></div>
<div class="t" style="left:1034.5px;top:532px;width:77.5px;height:25px;line-height:25px;text-align:left;overflow:hidden;white-space:nowrap;letter-spacing:-0.061px;">Używaj paramet</div>
<div style="left:1117px;top:532px;width:1px;height:74px;background:#cfcfcf;"></div>
<div class="t" style="left:1122.5px;top:532px;width:25px;height:25px;line-height:25px;text-align:left;overflow:hidden;white-space:nowrap;letter-spacing:-0.666px;">Minim</div>
<div style="left:344px;top:557px;width:804px;height:1px;background:#cfcfcf;"></div>
<svg style="left:350px;top:537.5px" width="14" height="14" viewBox="0 0 14 14"><circle cx="7" cy="7" r="2" fill="none" stroke="#f7941d" stroke-width="1.1"/><path d="M10.80 7.00L13.40 7.00" stroke="#f7941d" stroke-width="1.1"/><path d="M9.69 9.69L11.53 11.53" stroke="#f7941d" stroke-width="1.1"/><path d="M7.00 10.80L7.00 13.40" stroke="#f7941d" stroke-width="1.1"/><path d="M4.31 9.69L2.47 11.53" stroke="#f7941d" stroke-width="1.1"/><path d="M3.20 7.00L0.60 7.00" stroke="#f7941d" stroke-width="1.1"/><path d="M4.31 4.31L2.47 2.47" stroke="#f7941d" stroke-width="1.1"/><path d="M7.00 3.20L7.00 0.60" stroke="#f7941d" stroke-width="1.1"/><path d="M9.69 4.31L11.53 2.47" stroke="#f7941d" stroke-width="1.1"/></svg>
<svg style="left:354px;top:563.5px" width="8" height="12" viewBox="0 0 8 12"><path d="M1.5 1.5V10.5L6.5 6Z" fill="none" stroke="#8c8c8c" stroke-width="1"/></svg>
<div style="left:344px;top:652px;width:804px;height:7px;background:#e8e8e8;"></div>
<div style="left:342px;top:417px;width:1px;height:237px;background:#a2a2a2;"></div>
<div style="left:343px;top:417px;width:1px;height:236px;background:#c8c8c8;"></div>
<div style="left:1149px;top:417px;width:1px;height:237px;background:#a2a2a2;"></div>
<div style="left:1148px;top:417px;width:1px;height:236px;background:#c8c8c8;"></div>
<div style="left:343px;top:652px;width:806px;height:1px;background:#c8c8c8;"></div>
<div style="left:342px;top:653px;width:808px;height:1px;background:#a2a2a2;"></div>
<div style="left:743px;top:563px;width:1px;height:12.5px;background:#111;"></div>
<div style="left:371px;top:558px;width:776px;height:21px;border:1px dotted #222;"></div>
<div style="left:1159px;top:54px;width:210px;height:1px;background:#aeaeae;"></div>
<div class="t" style="left:1171px;top:36px;width:190px;height:14px;line-height:14px;text-align:center;letter-spacing:-0.134px;">Użytkownicy mogący wykonać akcję</div>
<svg style="left:1163px;top:60px" width="17" height="17" viewBox="0 0 17 17"><g fill="none" stroke="#03866f" stroke-width="3"><path d="M2 7.4A6.4 6.4 0 0 1 13.4 4"/><path d="M15 9.6A6.4 6.4 0 0 1 3.6 13"/></g><path d="M16.6 1.2V7.6H10.2Z" fill="#03866f"/><path d="M0.4 15.8V9.4H6.8Z" fill="#03866f"/></svg>
<svg style="left:1185px;top:60px" width="20" height="18" viewBox="0 0 20 18"><path d="M3 17V3" stroke="#0b78d5" stroke-width="2"/><path d="M0 5.5L3 0.5L6 5.5Z" fill="#0b78d5"/><g fill="none" stroke="#555" stroke-width="1.2"><rect x="10.8" y="1" width="3.6" height="3.8"/><rect x="9.6" y="7.4" width="6.4" height="3.4"/><rect x="9.6" y="13" width="9" height="3.4"/></g></svg>
<svg style="left:1212px;top:63px" width="8" height="6" viewBox="0 0 8 6"><path d="M1 5L3.8 1L6.6 5" fill="none" stroke="#444" stroke-width="1"/></svg>
<svg style="left:1228px;top:59px" width="20" height="20" viewBox="0 0 20 20"><rect x="0" y="0" width="17" height="4.6" fill="#0b78d5"/><rect x="0" y="6.2" width="5" height="2.4" fill="#a2a2a2"/><rect x="6" y="6.2" width="5" height="2.4" fill="#a2a2a2"/><rect x="12" y="6.2" width="5" height="2.4" fill="#a2a2a2"/><rect x="0" y="9.2" width="5" height="2.4" fill="#a2a2a2"/><rect x="6" y="9.2" width="5" height="2.4" fill="#a2a2a2"/><rect x="12" y="9.2" width="5" height="2.4" fill="#a2a2a2"/><rect x="0" y="12.2" width="5" height="2.4" fill="#a2a2a2"/><rect x="6" y="12.2" width="5" height="2.4" fill="#a2a2a2"/><rect x="12" y="12.2" width="5" height="2.4" fill="#a2a2a2"/><circle cx="12" cy="10.8" r="3.6" fill="#e8e8e8"/><path d="M11.5 7.94A2.9 2.9 0 1 1 9.14 10.3" fill="none" stroke="#0b78d5" stroke-width="2.1"/><path d="M13.8 13L18.6 18.2" stroke="#0b78d5" stroke-width="2.2"/></svg>
<div style="left:1161px;top:83px;width:208px;height:1px;background:#a4a4a4;"></div>
<div style="left:1161px;top:84px;width:208px;height:29px;background:#c8c8c8;"></div>
<div style="left:1163px;top:87px;width:24px;height:22.5px;background:#fff;border-radius:3.5px;border-bottom:1px solid #9a9a9a;box-sizing:border-box;"></div>
<div style="left:1189px;top:87px;width:24px;height:22.5px;background:#fff;border-radius:3.5px;border-bottom:1px solid #9a9a9a;box-sizing:border-box;"></div>
<div style="left:1215px;top:87px;width:165px;height:23px;background:#fff;border-radius:3.5px;border-bottom:1px solid #4e4e4e;box-sizing:border-box;"></div>
<svg style="left:1167px;top:89px" width="15" height="18" viewBox="0 0 15 18"><path d="M1 1H8.5L13 5.5V15.5H1Z" fill="none" stroke="#5a6268" stroke-width="1.5"/><path d="M8.5 0.6V5.5H13.4Z" fill="#5a6268"/></svg>
<svg style="left:1191.5px;top:89.5px" width="18" height="18" viewBox="0 0 18 18"><circle cx="11.5" cy="5.5" r="4.2" fill="none" stroke="#0b78d5" stroke-width="1.2"/><path d="M8.4 8.6L1.2 15.8" stroke="#555" stroke-width="1.4"/></svg>
<div style="left:1161px;top:113px;width:208px;height:539px;background:#fff;"></div>
<div style="left:1161px;top:113px;width:208px;height:26px;background:#f4f4f4;"></div>
<div style="left:1161px;top:139px;width:208px;height:25px;background:#c8c8c8;"></div>
<div style="left:1161px;top:139px;width:27px;height:25px;background:#f4f4f4;"></div>
<div style="left:1188px;top:139px;width:94px;height:25px;background:#e8e8e8;"></div>
<svg style="left:1226px;top:143px" width="16" height="16" viewBox="0 0 16 16"><rect x="0" y="0" width="16" height="16" rx="3.5" fill="#0b64c0"/><path d="M3 8.5L6.3 11.2L12.8 4.4" fill="none" stroke="#fff" stroke-width="1.1"/></svg>
<svg style="left:1291px;top:145px" width="12" height="12" viewBox="0 0 12 12"><path d="M6 0C8 0 9.1 1.5 9.1 3.4C9.1 5 8.4 6.3 7.5 6.9V7.7C9.5 8.3 12 9 12 10.5V12H0V10.5C0 9 2.5 8.3 4.5 7.7V6.9C3.6 6.3 2.9 5 2.9 3.4C2.9 1.5 4 0 6 0Z" fill="#0b78d5"/></svg>
<div class="t" style="left:1317px;top:139px;width:52px;height:24px;line-height:24px;text-align:left;overflow:hidden;white-space:nowrap;letter-spacing:-0.489px;">ADMIN</div>
<div style="left:1161px;top:163px;width:208px;height:1px;background:#cfcfcf;"></div>
<div style="left:1161px;top:164px;width:208px;height:25px;background:#fff;"></div>
<div style="left:1161px;top:164px;width:27px;height:25px;background:#f4f4f4;"></div>
<svg style="left:1226px;top:168px" width="16" height="16" viewBox="0 0 16 16"><rect x="0.5" y="0.5" width="15" height="15" rx="3.5" fill="#fff" stroke="#8f8f8f" stroke-width="1"/></svg>
<svg style="left:1291px;top:170px" width="12" height="12" viewBox="0 0 12 12"><path d="M6 0C8 0 9.1 1.5 9.1 3.4C9.1 5 8.4 6.3 7.5 6.9V7.7C9.5 8.3 12 9 12 10.5V12H0V10.5C0 9 2.5 8.3 4.5 7.7V6.9C3.6 6.3 2.9 5 2.9 3.4C2.9 1.5 4 0 6 0Z" fill="#0b78d5"/></svg>
<div class="t" style="left:1317px;top:164px;width:52px;height:24px;line-height:24px;text-align:left;overflow:hidden;white-space:nowrap;letter-spacing:-0.989px;">BANK</div>
<div style="left:1161px;top:188px;width:208px;height:1px;background:#cfcfcf;"></div>
<div style="left:1161px;top:189px;width:208px;height:25px;background:#e8e8e8;"></div>
<div style="left:1161px;top:189px;width:27px;height:25px;background:#f4f4f4;"></div>
<svg style="left:1226px;top:193px" width="16" height="16" viewBox="0 0 16 16"><rect x="0.5" y="0.5" width="15" height="15" rx="3.5" fill="#fff" stroke="#8f8f8f" stroke-width="1"/></svg>
<svg style="left:1291px;top:195px" width="12" height="12" viewBox="0 0 12 12"><path d="M6 0C8 0 9.1 1.5 9.1 3.4C9.1 5 8.4 6.3 7.5 6.9V7.7C9.5 8.3 12 9 12 10.5V12H0V10.5C0 9 2.5 8.3 4.5 7.7V6.9C3.6 6.3 2.9 5 2.9 3.4C2.9 1.5 4 0 6 0Z" fill="#0b78d5"/></svg>
<div class="t" style="left:1317px;top:189px;width:52px;height:24px;line-height:24px;text-align:left;overflow:hidden;white-space:nowrap;letter-spacing:-0.649px;">PRACOWNIK</div>
<div style="left:1161px;top:213px;width:208px;height:1px;background:#cfcfcf;"></div>
<div style="left:1161px;top:214px;width:208px;height:25px;background:#fff;"></div>
<div style="left:1161px;top:214px;width:27px;height:25px;background:#f4f4f4;"></div>
<svg style="left:1226px;top:218px" width="16" height="16" viewBox="0 0 16 16"><rect x="0.5" y="0.5" width="15" height="15" rx="3.5" fill="#fff" stroke="#8f8f8f" stroke-width="1"/></svg>
<svg style="left:1291px;top:220px" width="12" height="12" viewBox="0 0 12 12"><path d="M6 0C8 0 9.1 1.5 9.1 3.4C9.1 5 8.4 6.3 7.5 6.9V7.7C9.5 8.3 12 9 12 10.5V12H0V10.5C0 9 2.5 8.3 4.5 7.7V6.9C3.6 6.3 2.9 5 2.9 3.4C2.9 1.5 4 0 6 0Z" fill="#0b78d5"/></svg>
<div class="t" style="left:1317px;top:214px;width:52px;height:24px;line-height:24px;text-align:left;overflow:hidden;white-space:nowrap;letter-spacing:-0.595px;">PRACOWNIK2</div>
<div style="left:1161px;top:238px;width:208px;height:1px;background:#cfcfcf;"></div>
<div style="left:1161px;top:239px;width:208px;height:25px;background:#e8e8e8;"></div>
<div style="left:1161px;top:239px;width:27px;height:25px;background:#f4f4f4;"></div>
<svg style="left:1226px;top:243px" width="16" height="16" viewBox="0 0 16 16"><rect x="0.5" y="0.5" width="15" height="15" rx="3.5" fill="#fff" stroke="#8f8f8f" stroke-width="1"/></svg>
<svg style="left:1291px;top:245px" width="12" height="12" viewBox="0 0 12 12"><path d="M6 0C8 0 9.1 1.5 9.1 3.4C9.1 5 8.4 6.3 7.5 6.9V7.7C9.5 8.3 12 9 12 10.5V12H0V10.5C0 9 2.5 8.3 4.5 7.7V6.9C3.6 6.3 2.9 5 2.9 3.4C2.9 1.5 4 0 6 0Z" fill="#0b78d5"/></svg>
<div class="t" style="left:1317px;top:239px;width:52px;height:24px;line-height:24px;text-align:left;overflow:hidden;white-space:nowrap;letter-spacing:-1.028px;">TK</div>
<div style="left:1161px;top:263px;width:208px;height:1px;background:#cfcfcf;"></div>
<div style="left:1161px;top:264px;width:208px;height:25px;background:#fff;"></div>
<div style="left:1161px;top:264px;width:27px;height:25px;background:#f4f4f4;"></div>
<svg style="left:1226px;top:268px" width="16" height="16" viewBox="0 0 16 16"><rect x="0.5" y="0.5" width="15" height="15" rx="3.5" fill="#fff" stroke="#8f8f8f" stroke-width="1"/></svg>
<svg style="left:1291px;top:270px" width="12" height="12" viewBox="0 0 12 12"><path d="M6 0C8 0 9.1 1.5 9.1 3.4C9.1 5 8.4 6.3 7.5 6.9V7.7C9.5 8.3 12 9 12 10.5V12H0V10.5C0 9 2.5 8.3 4.5 7.7V6.9C3.6 6.3 2.9 5 2.9 3.4C2.9 1.5 4 0 6 0Z" fill="#0b78d5"/></svg>
<div class="t" style="left:1317px;top:264px;width:52px;height:24px;line-height:24px;text-align:left;overflow:hidden;white-space:nowrap;letter-spacing:-0.983px;">TOMEK</div>
<div style="left:1161px;top:288px;width:208px;height:1px;background:#cfcfcf;"></div>
<div style="left:1161px;top:289px;width:208px;height:25px;background:#e8e8e8;"></div>
<div style="left:1161px;top:289px;width:27px;height:25px;background:#f4f4f4;"></div>
<svg style="left:1226px;top:293px" width="16" height="16" viewBox="0 0 16 16"><rect x="0.5" y="0.5" width="15" height="15" rx="3.5" fill="#fff" stroke="#8f8f8f" stroke-width="1"/></svg>
<svg style="left:1291px;top:295px" width="12" height="12" viewBox="0 0 12 12"><path d="M6 0C8 0 9.1 1.5 9.1 3.4C9.1 5 8.4 6.3 7.5 6.9V7.7C9.5 8.3 12 9 12 10.5V12H0V10.5C0 9 2.5 8.3 4.5 7.7V6.9C3.6 6.3 2.9 5 2.9 3.4C2.9 1.5 4 0 6 0Z" fill="#0b78d5"/></svg>
<div class="t" style="left:1317px;top:289px;width:52px;height:24px;line-height:24px;text-align:left;overflow:hidden;white-space:nowrap;word-spacing:-1.5px;letter-spacing:-0.306px;">TEST 10000</div>
<div style="left:1161px;top:313px;width:208px;height:1px;background:#cfcfcf;"></div>
<div style="left:1161px;top:314px;width:208px;height:25px;background:#fff;"></div>
<div style="left:1161px;top:314px;width:27px;height:25px;background:#f4f4f4;"></div>
<svg style="left:1226px;top:318px" width="16" height="16" viewBox="0 0 16 16"><rect x="0.5" y="0.5" width="15" height="15" rx="3.5" fill="#fff" stroke="#8f8f8f" stroke-width="1"/></svg>
<svg style="left:1289px;top:319px" width="16" height="14" viewBox="0 0 16 14"><path transform="translate(4,0)" d="M6 0C8 0 9.1 1.5 9.1 3.4C9.1 5 8.4 6.3 7.5 6.9V7.7C9.5 8.3 12 9 12 10.5V12H0V10.5C0 9 2.5 8.3 4.5 7.7V6.9C3.6 6.3 2.9 5 2.9 3.4C2.9 1.5 4 0 6 0Z" fill="#a3a8ab"/><path transform="translate(0,2)" d="M6 0C8 0 9.1 1.5 9.1 3.4C9.1 5 8.4 6.3 7.5 6.9V7.7C9.5 8.3 12 9 12 10.5V12H0V10.5C0 9 2.5 8.3 4.5 7.7V6.9C3.6 6.3 2.9 5 2.9 3.4C2.9 1.5 4 0 6 0Z" fill="#4a5358"/></svg>
<div class="t" style="left:1317px;top:314px;width:52px;height:24px;line-height:24px;text-align:left;overflow:hidden;white-space:nowrap;letter-spacing:-0.55px;">grpBANK</div>
<div style="left:1161px;top:338px;width:208px;height:1px;background:#cfcfcf;"></div>
<div style="left:1161px;top:339px;width:208px;height:25px;background:#e8e8e8;"></div>
<div style="left:1161px;top:339px;width:27px;height:25px;background:#f4f4f4;"></div>
<svg style="left:1226px;top:343px" width="16" height="16" viewBox="0 0 16 16"><rect x="0.5" y="0.5" width="15" height="15" rx="3.5" fill="#fff" stroke="#8f8f8f" stroke-width="1"/></svg>
<svg style="left:1289px;top:344px" width="16" height="14" viewBox="0 0 16 14"><path transform="translate(4,0)" d="M6 0C8 0 9.1 1.5 9.1 3.4C9.1 5 8.4 6.3 7.5 6.9V7.7C9.5 8.3 12 9 12 10.5V12H0V10.5C0 9 2.5 8.3 4.5 7.7V6.9C3.6 6.3 2.9 5 2.9 3.4C2.9 1.5 4 0 6 0Z" fill="#a3a8ab"/><path transform="translate(0,2)" d="M6 0C8 0 9.1 1.5 9.1 3.4C9.1 5 8.4 6.3 7.5 6.9V7.7C9.5 8.3 12 9 12 10.5V12H0V10.5C0 9 2.5 8.3 4.5 7.7V6.9C3.6 6.3 2.9 5 2.9 3.4C2.9 1.5 4 0 6 0Z" fill="#4a5358"/></svg>
<div class="t" style="left:1317px;top:339px;width:52px;height:24px;line-height:24px;text-align:left;overflow:hidden;white-space:nowrap;letter-spacing:-0.629px;">DEWIZY</div>
<div style="left:1161px;top:363px;width:208px;height:1px;background:#cfcfcf;"></div>
<div style="left:1161px;top:364px;width:208px;height:25px;background:#fff;"></div>
<div style="left:1161px;top:364px;width:27px;height:25px;background:#f4f4f4;"></div>
<svg style="left:1226px;top:368px" width="16" height="16" viewBox="0 0 16 16"><rect x="0.5" y="0.5" width="15" height="15" rx="3.5" fill="#fff" stroke="#8f8f8f" stroke-width="1"/></svg>
<svg style="left:1289px;top:369px" width="16" height="14" viewBox="0 0 16 14"><path transform="translate(4,0)" d="M6 0C8 0 9.1 1.5 9.1 3.4C9.1 5 8.4 6.3 7.5 6.9V7.7C9.5 8.3 12 9 12 10.5V12H0V10.5C0 9 2.5 8.3 4.5 7.7V6.9C3.6 6.3 2.9 5 2.9 3.4C2.9 1.5 4 0 6 0Z" fill="#a3a8ab"/><path transform="translate(0,2)" d="M6 0C8 0 9.1 1.5 9.1 3.4C9.1 5 8.4 6.3 7.5 6.9V7.7C9.5 8.3 12 9 12 10.5V12H0V10.5C0 9 2.5 8.3 4.5 7.7V6.9C3.6 6.3 2.9 5 2.9 3.4C2.9 1.5 4 0 6 0Z" fill="#4a5358"/></svg>
<div class="t" style="left:1317px;top:364px;width:52px;height:24px;line-height:24px;text-align:left;overflow:hidden;white-space:nowrap;letter-spacing:0.112px;">IT</div>
<div style="left:1161px;top:388px;width:208px;height:1px;background:#cfcfcf;"></div>
<div style="left:1161px;top:389px;width:208px;height:25px;background:#e8e8e8;"></div>
<div style="left:1161px;top:389px;width:27px;height:25px;background:#f4f4f4;"></div>
<svg style="left:1226px;top:393px" width="16" height="16" viewBox="0 0 16 16"><rect x="0.5" y="0.5" width="15" height="15" rx="3.5" fill="#fff" stroke="#8f8f8f" stroke-width="1"/></svg>
<svg style="left:1289px;top:394px" width="16" height="14" viewBox="0 0 16 14"><path transform="translate(4,0)" d="M6 0C8 0 9.1 1.5 9.1 3.4C9.1 5 8.4 6.3 7.5 6.9V7.7C9.5 8.3 12 9 12 10.5V12H0V10.5C0 9 2.5 8.3 4.5 7.7V6.9C3.6 6.3 2.9 5 2.9 3.4C2.9 1.5 4 0 6 0Z" fill="#a3a8ab"/><path transform="translate(0,2)" d="M6 0C8 0 9.1 1.5 9.1 3.4C9.1 5 8.4 6.3 7.5 6.9V7.7C9.5 8.3 12 9 12 10.5V12H0V10.5C0 9 2.5 8.3 4.5 7.7V6.9C3.6 6.3 2.9 5 2.9 3.4C2.9 1.5 4 0 6 0Z" fill="#4a5358"/></svg>
<div class="t" style="left:1317px;top:389px;width:52px;height:24px;line-height:24px;text-align:left;overflow:hidden;white-space:nowrap;letter-spacing:-0.683px;">UCHWALY</div>
<div style="left:1161px;top:413px;width:208px;height:1px;background:#cfcfcf;"></div>
<div style="left:1161px;top:414px;width:208px;height:25px;background:#fff;"></div>
<div style="left:1161px;top:414px;width:27px;height:25px;background:#f4f4f4;"></div>
<svg style="left:1226px;top:418px" width="16" height="16" viewBox="0 0 16 16"><rect x="0.5" y="0.5" width="15" height="15" rx="3.5" fill="#fff" stroke="#8f8f8f" stroke-width="1"/></svg>
<svg style="left:1289px;top:419px" width="16" height="14" viewBox="0 0 16 14"><path transform="translate(4,0)" d="M6 0C8 0 9.1 1.5 9.1 3.4C9.1 5 8.4 6.3 7.5 6.9V7.7C9.5 8.3 12 9 12 10.5V12H0V10.5C0 9 2.5 8.3 4.5 7.7V6.9C3.6 6.3 2.9 5 2.9 3.4C2.9 1.5 4 0 6 0Z" fill="#a3a8ab"/><path transform="translate(0,2)" d="M6 0C8 0 9.1 1.5 9.1 3.4C9.1 5 8.4 6.3 7.5 6.9V7.7C9.5 8.3 12 9 12 10.5V12H0V10.5C0 9 2.5 8.3 4.5 7.7V6.9C3.6 6.3 2.9 5 2.9 3.4C2.9 1.5 4 0 6 0Z" fill="#4a5358"/></svg>
<div class="t" style="left:1317px;top:414px;width:52px;height:24px;line-height:24px;text-align:left;overflow:hidden;white-space:nowrap;letter-spacing:-0.528px;">ZA</div>
<div style="left:1161px;top:438px;width:208px;height:1px;background:#cfcfcf;"></div>
<div style="left:1161px;top:439px;width:208px;height:25px;background:#e8e8e8;"></div>
<div style="left:1161px;top:439px;width:27px;height:25px;background:#f4f4f4;"></div>
<svg style="left:1226px;top:443px" width="16" height="16" viewBox="0 0 16 16"><rect x="0.5" y="0.5" width="15" height="15" rx="3.5" fill="#fff" stroke="#8f8f8f" stroke-width="1"/></svg>
<svg style="left:1289px;top:444px" width="16" height="14" viewBox="0 0 16 14"><path transform="translate(4,0)" d="M6 0C8 0 9.1 1.5 9.1 3.4C9.1 5 8.4 6.3 7.5 6.9V7.7C9.5 8.3 12 9 12 10.5V12H0V10.5C0 9 2.5 8.3 4.5 7.7V6.9C3.6 6.3 2.9 5 2.9 3.4C2.9 1.5 4 0 6 0Z" fill="#a3a8ab"/><path transform="translate(0,2)" d="M6 0C8 0 9.1 1.5 9.1 3.4C9.1 5 8.4 6.3 7.5 6.9V7.7C9.5 8.3 12 9 12 10.5V12H0V10.5C0 9 2.5 8.3 4.5 7.7V6.9C3.6 6.3 2.9 5 2.9 3.4C2.9 1.5 4 0 6 0Z" fill="#4a5358"/></svg>
<div class="t" style="left:1317px;top:439px;width:52px;height:24px;line-height:24px;text-align:left;overflow:hidden;white-space:nowrap;letter-spacing:-0.84px;">KSIEGOWOSC</div>
<div style="left:1161px;top:463px;width:208px;height:1px;background:#cfcfcf;"></div>
<div style="left:1161px;top:464px;width:208px;height:25px;background:#fff;"></div>
<div style="left:1161px;top:464px;width:27px;height:25px;background:#f4f4f4;"></div>
<svg style="left:1226px;top:468px" width="16" height="16" viewBox="0 0 16 16"><rect x="0.5" y="0.5" width="15" height="15" rx="3.5" fill="#fff" stroke="#8f8f8f" stroke-width="1"/></svg>
<svg style="left:1289px;top:469px" width="16" height="14" viewBox="0 0 16 14"><path transform="translate(4,0)" d="M6 0C8 0 9.1 1.5 9.1 3.4C9.1 5 8.4 6.3 7.5 6.9V7.7C9.5 8.3 12 9 12 10.5V12H0V10.5C0 9 2.5 8.3 4.5 7.7V6.9C3.6 6.3 2.9 5 2.9 3.4C2.9 1.5 4 0 6 0Z" fill="#a3a8ab"/><path transform="translate(0,2)" d="M6 0C8 0 9.1 1.5 9.1 3.4C9.1 5 8.4 6.3 7.5 6.9V7.7C9.5 8.3 12 9 12 10.5V12H0V10.5C0 9 2.5 8.3 4.5 7.7V6.9C3.6 6.3 2.9 5 2.9 3.4C2.9 1.5 4 0 6 0Z" fill="#4a5358"/></svg>
<div class="t" style="left:1317px;top:464px;width:52px;height:24px;line-height:24px;text-align:left;overflow:hidden;white-space:nowrap;letter-spacing:-0.711px;">OBSŁUGA KLIENTA</div>
<div style="left:1161px;top:488px;width:208px;height:1px;background:#cfcfcf;"></div>
<div style="left:1161px;top:489px;width:208px;height:25px;background:#e8e8e8;"></div>
<div style="left:1161px;top:489px;width:27px;height:25px;background:#f4f4f4;"></div>
<svg style="left:1226px;top:493px" width="16" height="16" viewBox="0 0 16 16"><rect x="0.5" y="0.5" width="15" height="15" rx="3.5" fill="#fff" stroke="#8f8f8f" stroke-width="1"/></svg>
<svg style="left:1289px;top:494px" width="16" height="14" viewBox="0 0 16 14"><path transform="translate(4,0)" d="M6 0C8 0 9.1 1.5 9.1 3.4C9.1 5 8.4 6.3 7.5 6.9V7.7C9.5 8.3 12 9 12 10.5V12H0V10.5C0 9 2.5 8.3 4.5 7.7V6.9C3.6 6.3 2.9 5 2.9 3.4C2.9 1.5 4 0 6 0Z" fill="#a3a8ab"/><path transform="translate(0,2)" d="M6 0C8 0 9.1 1.5 9.1 3.4C9.1 5 8.4 6.3 7.5 6.9V7.7C9.5 8.3 12 9 12 10.5V12H0V10.5C0 9 2.5 8.3 4.5 7.7V6.9C3.6 6.3 2.9 5 2.9 3.4C2.9 1.5 4 0 6 0Z" fill="#4a5358"/></svg>
<div class="t" style="left:1317px;top:489px;width:52px;height:24px;line-height:24px;text-align:left;overflow:hidden;white-space:nowrap;letter-spacing:-1.136px;">KREDYTY</div>
<div style="left:1161px;top:513px;width:208px;height:1px;background:#cfcfcf;"></div>
<div style="left:1161px;top:514px;width:208px;height:25px;background:#fff;"></div>
<div style="left:1161px;top:514px;width:27px;height:25px;background:#f4f4f4;"></div>
<svg style="left:1226px;top:518px" width="16" height="16" viewBox="0 0 16 16"><rect x="0.5" y="0.5" width="15" height="15" rx="3.5" fill="#fff" stroke="#8f8f8f" stroke-width="1"/></svg>
<svg style="left:1289px;top:519px" width="16" height="14" viewBox="0 0 16 14"><path transform="translate(4,0)" d="M6 0C8 0 9.1 1.5 9.1 3.4C9.1 5 8.4 6.3 7.5 6.9V7.7C9.5 8.3 12 9 12 10.5V12H0V10.5C0 9 2.5 8.3 4.5 7.7V6.9C3.6 6.3 2.9 5 2.9 3.4C2.9 1.5 4 0 6 0Z" fill="#a3a8ab"/><path transform="translate(0,2)" d="M6 0C8 0 9.1 1.5 9.1 3.4C9.1 5 8.4 6.3 7.5 6.9V7.7C9.5 8.3 12 9 12 10.5V12H0V10.5C0 9 2.5 8.3 4.5 7.7V6.9C3.6 6.3 2.9 5 2.9 3.4C2.9 1.5 4 0 6 0Z" fill="#4a5358"/></svg>
<div class="t" style="left:1317px;top:514px;width:52px;height:24px;line-height:24px;text-align:left;overflow:hidden;white-space:nowrap;letter-spacing:-0.814px;">KONTROLA</div>
<div style="left:1161px;top:538px;width:208px;height:1px;background:#cfcfcf;"></div>
<div style="left:1161px;top:539px;width:208px;height:25px;background:#e8e8e8;"></div>
<div style="left:1161px;top:539px;width:27px;height:25px;background:#f4f4f4;"></div>
<svg style="left:1226px;top:543px" width="16" height="16" viewBox="0 0 16 16"><rect x="0.5" y="0.5" width="15" height="15" rx="3.5" fill="#fff" stroke="#8f8f8f" stroke-width="1"/></svg>
<svg style="left:1289px;top:544px" width="16" height="14" viewBox="0 0 16 14"><path transform="translate(4,0)" d="M6 0C8 0 9.1 1.5 9.1 3.4C9.1 5 8.4 6.3 7.5 6.9V7.7C9.5 8.3 12 9 12 10.5V12H0V10.5C0 9 2.5 8.3 4.5 7.7V6.9C3.6 6.3 2.9 5 2.9 3.4C2.9 1.5 4 0 6 0Z" fill="#a3a8ab"/><path transform="translate(0,2)" d="M6 0C8 0 9.1 1.5 9.1 3.4C9.1 5 8.4 6.3 7.5 6.9V7.7C9.5 8.3 12 9 12 10.5V12H0V10.5C0 9 2.5 8.3 4.5 7.7V6.9C3.6 6.3 2.9 5 2.9 3.4C2.9 1.5 4 0 6 0Z" fill="#4a5358"/></svg>
<div class="t" style="left:1317px;top:539px;width:52px;height:24px;line-height:24px;text-align:left;overflow:hidden;white-space:nowrap;letter-spacing:-0.422px;">NADAWANIE</div>
<div style="left:1161px;top:563px;width:208px;height:1px;background:#cfcfcf;"></div>
<div style="left:1161px;top:564px;width:208px;height:25px;background:#fff;"></div>
<div style="left:1161px;top:564px;width:27px;height:25px;background:#f4f4f4;"></div>
<svg style="left:1226px;top:568px" width="16" height="16" viewBox="0 0 16 16"><rect x="0.5" y="0.5" width="15" height="15" rx="3.5" fill="#fff" stroke="#8f8f8f" stroke-width="1"/></svg>
<svg style="left:1289px;top:569px" width="16" height="14" viewBox="0 0 16 14"><path transform="translate(4,0)" d="M6 0C8 0 9.1 1.5 9.1 3.4C9.1 5 8.4 6.3 7.5 6.9V7.7C9.5 8.3 12 9 12 10.5V12H0V10.5C0 9 2.5 8.3 4.5 7.7V6.9C3.6 6.3 2.9 5 2.9 3.4C2.9 1.5 4 0 6 0Z" fill="#a3a8ab"/><path transform="translate(0,2)" d="M6 0C8 0 9.1 1.5 9.1 3.4C9.1 5 8.4 6.3 7.5 6.9V7.7C9.5 8.3 12 9 12 10.5V12H0V10.5C0 9 2.5 8.3 4.5 7.7V6.9C3.6 6.3 2.9 5 2.9 3.4C2.9 1.5 4 0 6 0Z" fill="#4a5358"/></svg>
<div class="t" style="left:1317px;top:564px;width:52px;height:24px;line-height:24px;text-align:left;overflow:hidden;white-space:nowrap;letter-spacing:-0.461px;">ZAJECIA</div>
<div style="left:1161px;top:588px;width:208px;height:1px;background:#cfcfcf;"></div>
<div style="left:1161px;top:589px;width:208px;height:25px;background:#e8e8e8;"></div>
<div style="left:1161px;top:589px;width:27px;height:25px;background:#f4f4f4;"></div>
<svg style="left:1226px;top:593px" width="16" height="16" viewBox="0 0 16 16"><rect x="0.5" y="0.5" width="15" height="15" rx="3.5" fill="#fff" stroke="#8f8f8f" stroke-width="1"/></svg>
<svg style="left:1289px;top:594px" width="16" height="14" viewBox="0 0 16 14"><path transform="translate(4,0)" d="M6 0C8 0 9.1 1.5 9.1 3.4C9.1 5 8.4 6.3 7.5 6.9V7.7C9.5 8.3 12 9 12 10.5V12H0V10.5C0 9 2.5 8.3 4.5 7.7V6.9C3.6 6.3 2.9 5 2.9 3.4C2.9 1.5 4 0 6 0Z" fill="#a3a8ab"/><path transform="translate(0,2)" d="M6 0C8 0 9.1 1.5 9.1 3.4C9.1 5 8.4 6.3 7.5 6.9V7.7C9.5 8.3 12 9 12 10.5V12H0V10.5C0 9 2.5 8.3 4.5 7.7V6.9C3.6 6.3 2.9 5 2.9 3.4C2.9 1.5 4 0 6 0Z" fill="#4a5358"/></svg>
<div class="t" style="left:1317px;top:589px;width:52px;height:24px;line-height:24px;text-align:left;overflow:hidden;white-space:nowrap;letter-spacing:0.23px;">test1</div>
<div style="left:1161px;top:613px;width:208px;height:1px;background:#cfcfcf;"></div>
<div style="left:1161px;top:614px;width:208px;height:25px;background:#fff;"></div>
<div style="left:1161px;top:614px;width:27px;height:25px;background:#f4f4f4;"></div>
<svg style="left:1226px;top:618px" width="16" height="16" viewBox="0 0 16 16"><rect x="0.5" y="0.5" width="15" height="15" rx="3.5" fill="#fff" stroke="#8f8f8f" stroke-width="1"/></svg>
<svg style="left:1289px;top:619px" width="16" height="14" viewBox="0 0 16 14"><path transform="translate(4,0)" d="M6 0C8 0 9.1 1.5 9.1 3.4C9.1 5 8.4 6.3 7.5 6.9V7.7C9.5 8.3 12 9 12 10.5V12H0V10.5C0 9 2.5 8.3 4.5 7.7V6.9C3.6 6.3 2.9 5 2.9 3.4C2.9 1.5 4 0 6 0Z" fill="#a3a8ab"/><path transform="translate(0,2)" d="M6 0C8 0 9.1 1.5 9.1 3.4C9.1 5 8.4 6.3 7.5 6.9V7.7C9.5 8.3 12 9 12 10.5V12H0V10.5C0 9 2.5 8.3 4.5 7.7V6.9C3.6 6.3 2.9 5 2.9 3.4C2.9 1.5 4 0 6 0Z" fill="#4a5358"/></svg>
<div class="t" style="left:1317px;top:614px;width:52px;height:24px;line-height:24px;text-align:left;overflow:hidden;white-space:nowrap;letter-spacing:-0.75px;">RODO</div>
<div style="left:1161px;top:638px;width:208px;height:1px;background:#cfcfcf;"></div>
<div style="left:1161px;top:639px;width:208px;height:13px;background:#e8e8e8;"></div>
<div style="left:1161px;top:639px;width:27px;height:13px;background:#f4f4f4;"></div>
<svg style="left:1226px;top:643px" width="16" height="16" viewBox="0 0 16 16"><rect x="0.5" y="0.5" width="15" height="15" rx="3.5" fill="#fff" stroke="#8f8f8f" stroke-width="1"/></svg>
<svg style="left:1291px;top:645px" width="12" height="12" viewBox="0 0 12 12"><path d="M6 0C8 0 9.1 1.5 9.1 3.4C9.1 5 8.4 6.3 7.5 6.9V7.7C9.5 8.3 12 9 12 10.5V12H0V10.5C0 9 2.5 8.3 4.5 7.7V6.9C3.6 6.3 2.9 5 2.9 3.4C2.9 1.5 4 0 6 0Z" fill="#0b78d5"/></svg>
<div class="t" style="left:1317px;top:639px;width:52px;height:24px;line-height:24px;text-align:left;overflow:hidden;white-space:nowrap;letter-spacing:-0.595px;">PRACOWNIK3</div>
<div style="left:1187px;top:113px;width:1px;height:539px;background:#cfcfcf;"></div>
<div class="t" style="left:1192.5px;top:113px;width:83.5px;height:25px;line-height:25px;text-align:left;overflow:hidden;white-space:nowrap;letter-spacing:-0.326px;">Pozwolenie</div>
<div style="left:1281px;top:113px;width:1px;height:539px;background:#cfcfcf;"></div>
<div class="t" style="left:1286.5px;top:113px;width:21.5px;height:25px;line-height:25px;text-align:left;overflow:hidden;white-space:nowrap;letter-spacing:-0.314px;">Grupa</div>
<div style="left:1313px;top:113px;width:1px;height:539px;background:#cfcfcf;"></div>
<div class="t" style="left:1318.5px;top:113px;width:50px;height:25px;line-height:25px;text-align:left;overflow:hidden;white-space:nowrap;letter-spacing:-0.162px;">Użytkownik</div>
<div style="left:1161px;top:138px;width:208px;height:1px;background:#cfcfcf;"></div>
<svg style="left:1167px;top:118.5px" width="14" height="14" viewBox="0 0 14 14"><circle cx="7" cy="7" r="2" fill="none" stroke="#f7941d" stroke-width="1.1"/><path d="M10.80 7.00L13.40 7.00" stroke="#f7941d" stroke-width="1.1"/><path d="M9.69 9.69L11.53 11.53" stroke="#f7941d" stroke-width="1.1"/><path d="M7.00 10.80L7.00 13.40" stroke="#f7941d" stroke-width="1.1"/><path d="M4.31 9.69L2.47 11.53" stroke="#f7941d" stroke-width="1.1"/><path d="M3.20 7.00L0.60 7.00" stroke="#f7941d" stroke-width="1.1"/><path d="M4.31 4.31L2.47 2.47" stroke="#f7941d" stroke-width="1.1"/><path d="M7.00 3.20L7.00 0.60" stroke="#f7941d" stroke-width="1.1"/><path d="M9.69 4.31L11.53 2.47" stroke="#f7941d" stroke-width="1.1"/></svg>
<svg style="left:1171px;top:145px" width="8" height="12" viewBox="0 0 8 12"><path d="M1.5 1.5V10.5L6.5 6Z" fill="none" stroke="#8c8c8c" stroke-width="1"/></svg>
<div style="left:1161px;top:652px;width:208px;height:7px;background:#e8e8e8;"></div>
<div style="left:1159px;top:54px;width:1px;height:600px;background:#a2a2a2;"></div>
<div style="left:1160px;top:54px;width:1px;height:599px;background:#c8c8c8;"></div>
<div style="left:1379px;top:54px;width:1px;height:600px;background:#a2a2a2;"></div>
<div style="left:1378px;top:54px;width:1px;height:599px;background:#c8c8c8;"></div>
<div style="left:1160px;top:652px;width:219px;height:1px;background:#c8c8c8;"></div>
<div style="left:1159px;top:653px;width:221px;height:1px;background:#a2a2a2;"></div>
<div style="left:2px;top:324px;width:2px;height:2px;background:#8e8e8e;"></div>
<div style="left:2px;top:328px;width:2px;height:2px;background:#8e8e8e;"></div>
<div style="left:2px;top:332px;width:2px;height:2px;background:#8e8e8e;"></div>
<div style="left:6px;top:324px;width:2px;height:2px;background:#8e8e8e;"></div>
<div style="left:6px;top:328px;width:2px;height:2px;background:#8e8e8e;"></div>
<div style="left:6px;top:332px;width:2px;height:2px;background:#8e8e8e;"></div>
<div style="left:334px;top:336px;width:2px;height:2px;background:#8e8e8e;"></div>
<div style="left:334px;top:340px;width:2px;height:2px;background:#8e8e8e;"></div>
<div style="left:334px;top:344px;width:2px;height:2px;background:#8e8e8e;"></div>
<div style="left:338px;top:336px;width:2px;height:2px;background:#8e8e8e;"></div>
<div style="left:338px;top:340px;width:2px;height:2px;background:#8e8e8e;"></div>
<div style="left:338px;top:344px;width:2px;height:2px;background:#8e8e8e;"></div>
<div style="left:741px;top:386px;width:2px;height:2px;background:#8e8e8e;"></div>
<div style="left:741px;top:390px;width:2px;height:2px;background:#8e8e8e;"></div>
<div style="left:745px;top:386px;width:2px;height:2px;background:#8e8e8e;"></div>
<div style="left:745px;top:390px;width:2px;height:2px;background:#8e8e8e;"></div>
<div style="left:749px;top:386px;width:2px;height:2px;background:#8e8e8e;"></div>
<div style="left:749px;top:390px;width:2px;height:2px;background:#8e8e8e;"></div>
<div style="left:1152px;top:336px;width:2px;height:2px;background:#8e8e8e;"></div>
<div style="left:1152px;top:340px;width:2px;height:2px;background:#8e8e8e;"></div>
<div style="left:1152px;top:344px;width:2px;height:2px;background:#8e8e8e;"></div>
<div style="left:1156px;top:336px;width:2px;height:2px;background:#8e8e8e;"></div>
<div style="left:1156px;top:340px;width:2px;height:2px;background:#8e8e8e;"></div>
<div style="left:1156px;top:344px;width:2px;height:2px;background:#8e8e8e;"></div>
<div style="left:346px;top:28px;width:126px;height:20px;border:5px solid #ed1c24;"></div>
<div style="left:340px;top:191px;width:704px;height:20px;border:5px solid #ed1c24;"></div>
<div style="left:345px;top:389px;width:104px;height:23px;border:5px solid #ed1c24;"></div>
<div style="left:343px;top:554px;width:797px;height:22px;border:5px solid #ed1c24;"></div>
<div style="left:1167px;top:25px;width:189px;height:23px;border:5px solid #ed1c24;"></div>
<div style="left:1159px;top:136px;width:201px;height:18px;border:5px solid #ed1c24;"></div>
</div></body></html>
